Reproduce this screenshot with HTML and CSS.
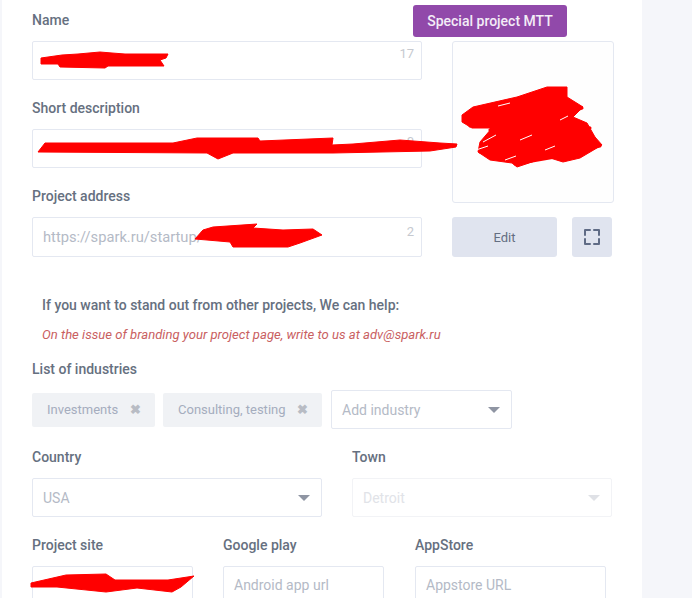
FILE: index.html
```html
<!DOCTYPE html>
<html lang="en">
<head>
    <meta charset="UTF-8">
    <meta name="viewport" content="width=device-width, initial-scale=1.0">
    <title>Project settings</title>
    <link rel="stylesheet" href="styles.css">
</head>
<body>
    <div class="panel">
        <div class="top">
            <div class="top-fields">
                <div class="field">
                    <label class="label">Name</label>
                    <div class="input"><span class="count">17</span></div>
                </div>
                <div class="field">
                    <label class="label">Short description</label>
                    <div class="input"><span class="count">0</span></div>
                </div>
                <div class="field">
                    <label class="label">Project address</label>
                    <div class="input input-tall">
                        <span class="placeholder">https://spark.ru/startup/</span>
                        <span class="count">2</span>
                    </div>
                </div>
            </div>
            <div class="side">
                <button class="special">Special project MTT</button>
                <div class="cover"></div>
                <div class="cover-actions">
                    <button class="edit">Edit</button>
                    <button class="expand" aria-label="Fullscreen">
                        <svg width="18" height="18" viewBox="0 0 18 18" fill="none" stroke="#5f6b85" stroke-width="2" stroke-linejoin="round" stroke-linecap="round">
                            <path d="M2 7V2H7M11 2H16V7M16 11V16H11M7 16H2V11"/>
                        </svg>
                    </button>
                </div>
            </div>
        </div>

        <div class="promo">
            <strong>If you want to stand out from other projects, We can help:</strong>
            <em>On the issue of branding your project page, write to us at adv@spark.ru</em>
        </div>

        <label class="label">List of industries</label>
        <div class="tags">
            <span class="tag tag-first">Investments <b>&#10006;</b></span>
            <span class="tag tag-second">Consulting, testing <b>&#10006;</b></span>
            <div class="select select-add"><span>Add industry</span><i class="caret"></i></div>
        </div>

        <div class="row-location">
            <div class="field">
                <label class="label">Country</label>
                <div class="select"><span>USA</span><i class="caret"></i></div>
            </div>
            <div class="field">
                <label class="label">Town</label>
                <div class="select disabled"><span>Detroit</span><i class="caret"></i></div>
            </div>
        </div>

        <div class="row-links">
            <div class="field">
                <label class="label">Project site</label>
                <div class="input"></div>
            </div>
            <div class="field">
                <label class="label">Google play</label>
                <div class="input"><span class="placeholder">Android app url</span></div>
            </div>
            <div class="field">
                <label class="label">AppStore</label>
                <div class="input"><span class="placeholder">Appstore URL</span></div>
            </div>
        </div>
    </div>

    <!-- red marker scribbles on top of the screenshot -->
    <svg class="scribbles" width="692" height="598" viewBox="0 0 692 598" fill="#ff0000" stroke="#ff0000" stroke-linejoin="round">
        <path d="M41 58L62 55L78 54L100 52L112 53L125 54L168 54L166 58L160 60L164 66L130 66L108 66L105 68L60 67L58 64L41 64Z"/>
        <path d="M45 143L173 143L197 138L258 138L260 141L333 138L332 145L353 144L400 140L440 143L457 144L456 147L430 151L333 153L233 153L218 159L207 153L38 152Z"/>
        <path d="M203 230L213 227L257 224L253 228L283 230L313 229L322 235L300 243L288 247L233 247L230 242L207 240L195 239Z"/>
        <path d="M462 115L473 107L517 97L547 87L567 87L567 97L583 107L573 117L587 123L595 137L602 145L580 158L563 162L547 157L517 167L512 163L490 160L478 152L480 142L492 128L472 128L462 122Z"/>
        <path fill="none" stroke-width="3" d="M464 118L500 104L470 126L530 100L490 130L582 108L482 144L590 128L480 152L600 146L515 164L584 152"/>
        <path d="M31 583L66 575L106 574L115 580L168 580L194 576L181 587L172 592L137 588L106 592L57 587L31 587Z"/>
        <path fill="none" stroke="#ffffff" stroke-width="1" d="M498 106L510 103M483 142L496 135M520 140L532 135M476 150L488 146M560 120L568 116M545 150L555 146M505 160L516 156"/>
    </svg>
</body>
</html>
```

FILE: styles.css
```css
:root {
    --bg-color: #f5f6fa;
    --border-color: #e4e8f1;
    --label-color: #667080;
    --placeholder-color: #b4bac6;
    --button-bg: #e0e4ef;
}

body {
    margin: 0;
    font-family: Roboto, Arial, sans-serif;
    font-size: 14px;
    background-color: var(--bg-color);
    height: 598px;
    overflow: hidden;
}

.panel {
    position: relative;
    margin-left: 2px;
    width: 610px;
    height: 598px;
    padding-left: 30px;
    background: #fff;
    overflow: hidden;
}

.scribbles {
    position: absolute;
    top: 0;
    left: 0;
    pointer-events: none;
}

.label {
    display: block;
    height: 17px;
    line-height: 17px;
    font-weight: 500;
    color: var(--label-color);
}

.top {
    display: flex;
    gap: 30px;
    padding-top: 5px;
}

.top-fields {
    width: 390px;
    padding-top: 7px;
}

.top-fields .field {
    margin-bottom: 20px;
}

.top-fields .field:last-child {
    margin-bottom: 0;
}

.top-fields .label {
    margin-bottom: 12px;
}

.input {
    position: relative;
    box-sizing: border-box;
    height: 39px;
    padding: 0 10px;
    line-height: 37px;
    background: #fff;
    border: 1px solid var(--border-color);
    border-radius: 2px;
    color: var(--placeholder-color);
}

.input-tall {
    height: 40px;
    line-height: 38px;
    font-size: 14.7px;
}

.input-tall .count {
    top: 7px;
}

.count {
    position: absolute;
    top: 5px;
    right: 7px;
    line-height: 14px;
    font-size: 13px;
    color: #c6c9cf;
}

.side {
    width: 162px;
}

.special {
    display: block;
    width: 154px;
    height: 32px;
    margin: 0 0 4px -39px;
    padding: 0;
    font: 500 14px Roboto, Arial, sans-serif;
    color: #f3ecf7;
    background: #9149aa;
    border: none;
    border-radius: 3px;
}

.cover {
    box-sizing: border-box;
    height: 162px;
    background: #fefefe;
    border: 1px solid var(--border-color);
    border-radius: 3px;
}

.cover-actions {
    display: flex;
    gap: 15px;
    margin-top: 14px;
}

.cover-actions button {
    height: 40px;
    padding: 0;
    background: var(--button-bg);
    border: none;
    border-radius: 3px;
}

.edit {
    width: 105px;
    font: 13px Roboto, Arial, sans-serif;
    color: #646e82;
}

.expand {
    display: flex;
    align-items: center;
    justify-content: center;
    width: 40px;
}

.promo {
    display: flex;
    flex-direction: column;
    gap: 12px;
    padding: 40px 0 0 10px;
    margin-bottom: 18px;
}

.promo strong {
    height: 17px;
    line-height: 17px;
    font-weight: 500;
    color: var(--label-color);
}

.promo em {
    height: 17px;
    line-height: 17px;
    font-size: 13.1px;
    color: #c9605f;
}

.tags {
    display: flex;
    align-items: center;
    gap: 8px;
    margin-top: 12px;
    height: 39px;
}

.tag {
    display: flex;
    align-items: center;
    justify-content: space-between;
    box-sizing: border-box;
    height: 34px;
    padding: 0 14px 0 15px;
    font-size: 13px;
    color: #a5adbe;
    background: #f0f2f5;
    border-radius: 2px;
}

.tag b {
    font-size: 13px;
    color: #b8bcc4;
}

.tag-first {
    width: 123px;
}

.tag-second {
    width: 159px;
}

.select {
    display: flex;
    align-items: center;
    justify-content: space-between;
    box-sizing: border-box;
    height: 39px;
    padding: 0 11px 0 10px;
    background: #fff;
    border: 1px solid var(--border-color);
    border-radius: 2px;
    color: var(--placeholder-color);
}

.select-add {
    width: 181px;
    margin-left: 1px;
}

.caret {
    width: 0;
    height: 0;
    border-left: 6.5px solid transparent;
    border-right: 6.5px solid transparent;
    border-top: 6px solid #8f95a3;
}

.select.disabled {
    color: #e1e3e8;
    border-color: #f2f3f6;
}

.select.disabled .caret {
    border-top-color: #dfe1e6;
}

.row-location {
    display: flex;
    gap: 30px;
    margin-top: 20px;
}

.row-location .field:first-child {
    width: 290px;
}

.row-location .field:last-child {
    width: 260px;
}

.row-location .label,
.row-links .label {
    margin-bottom: 12px;
}

.row-links {
    display: grid;
    grid-template-columns: 161px 161px 192px;
    column-gap: 30px;
    margin-top: 20px;
}

.row-links .field:last-child {
    margin-left: 1px;
}
```
